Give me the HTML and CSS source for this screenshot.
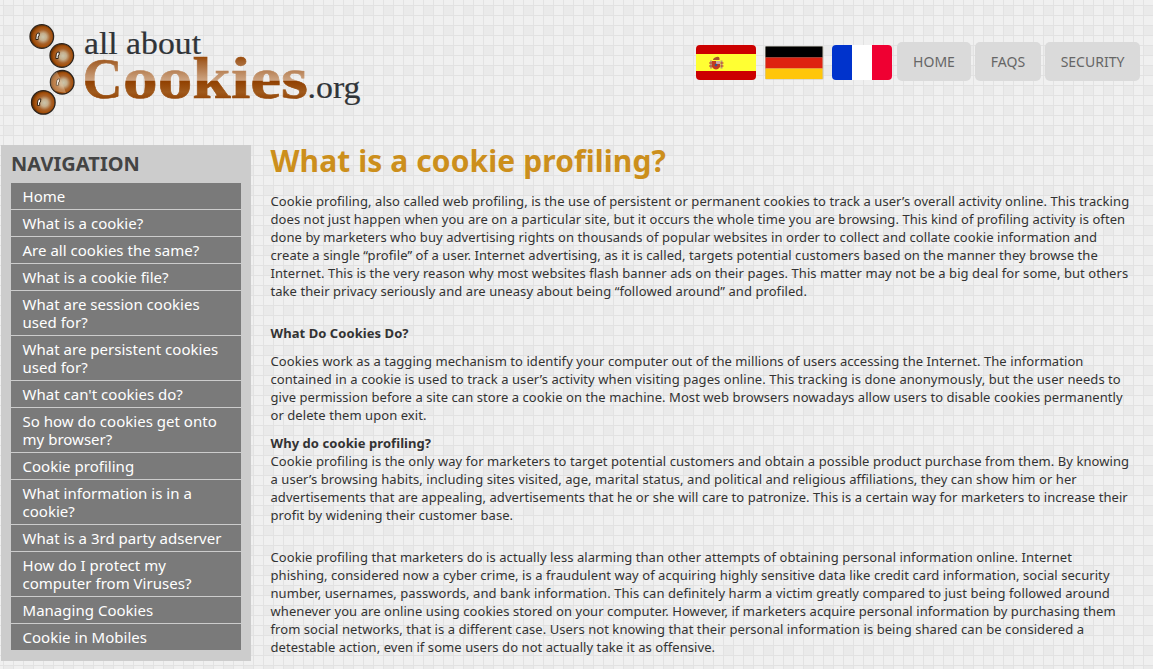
FILE: index.html
```html
<!DOCTYPE html>
<html lang="en">
<head>
<meta charset="utf-8">
<title>What is a cookie profiling?</title>
<link rel="stylesheet" href="styles.css">
</head>
<body>
<header class="header">
<svg class="logo" width="340" height="100" viewBox="24 20 340 100" role="img" aria-label="all about Cookies.org">
<defs>
<radialGradient id="bead" cx=".55" cy=".52" r=".5"><stop offset="0" stop-color="#cbc6ac"/><stop offset=".3" stop-color="#c5ae8c"/><stop offset=".6" stop-color="#a8622a"/><stop offset=".82" stop-color="#a4500c"/><stop offset="1" stop-color="#743500"/></radialGradient>
<linearGradient id="gloss" gradientUnits="userSpaceOnUse" x1="0" y1="56" x2="0" y2="101"><stop offset="0" stop-color="#974400"/><stop offset=".12" stop-color="#a3602a"/><stop offset=".54" stop-color="#cda482"/><stop offset=".56" stop-color="#914000"/><stop offset=".8" stop-color="#a05a1c"/><stop offset="1" stop-color="#914000"/></linearGradient>
<g id="ball"><circle r="11.8" fill="url(#bead)" stroke="#2c241e" stroke-width="1.3"/><path d="M-6 3L-5.500-1.500Q-4.800-4-2.500-3.500L-2.800-.3-3.700.2-3.600 3Z" fill="#fff" stroke="#241505" stroke-width=".9"/></g>
</defs>
<use href="#ball" x="41.800" y="36.500"/><use href="#ball" x="61.800" y="55.500"/><use href="#ball" x="62.200" y="82.300"/><use href="#ball" x="43.300" y="102.400"/>
<path d="M62 82L57 71.800A11.300 11.300 0 0 0 55 91L66 93Z" fill="#e8c7a5" opacity=".4"/>
<text class="logo-small" x="84" y="53.500" textLength="117" lengthAdjust="spacingAndGlyphs">all about</text>
<text class="logo-big" y="98"><tspan class="logo-cap" x="82.500" textLength="40" lengthAdjust="spacingAndGlyphs">C</tspan><tspan x="123" textLength="185" lengthAdjust="spacingAndGlyphs">ookies</tspan></text>
<text class="logo-small" x="307.500" y="98" textLength="53" lengthAdjust="spacingAndGlyphs">.org</text>
</svg>
<nav class="top">
<a class="flag"><svg width="60" height="35" viewBox="0 0 60 35"><clipPath id="rf"><rect width="60" height="35" rx="4"/></clipPath><g clip-path="url(#rf)"><path fill="#c00" d="M0 0h60v35H0z"/><path fill="#ff3" d="M0 9h60v17H0z"/></g><path d="M14 15.500h2v8h-2zM24.500 15.500h2v8h-2z" fill="#b99a70"/><path d="M13 18h3M24.500 18h3M13 21h3M24.500 21h3" stroke="#b33"/><path d="M16 16h8v6q-4 5-8 0z" fill="#c23b22"/><path d="M20 16h4v3h-4z" fill="#c9a9a5"/><path d="M17 15q0-2 3.500-3t3 3z" fill="#a7562b"/><circle cx="20" cy="20" r="1.300" fill="#36558f"/></svg></a>
<a class="flag"><svg width="60" height="35" viewBox="0 0 60 35"><rect x="1" y="1" width="58.500" height="33.500" rx="1.500" fill="#c9c6b8"/><path d="M1.500 1.500h57V12.500h-57z"/><path d="M1.500 12.500h57v11h-57z" fill="#de2110"/><path d="M1.500 23.500h57V34h-57z" fill="#ffc60a"/></svg></a>
<a class="flag"><svg width="60" height="35" viewBox="0 0 60 35"><g clip-path="url(#rf)"><path fill="#fff" d="M0 0h60v35H0z"/><path fill="#03c" d="M0 0h20v35H0z"/><path fill="#ef0032" d="M40 0h20v35H40z"/></g></svg></a>
<a class="tab home">HOME</a><a class="tab faqs">FAQS</a><a class="tab security">SECURITY</a>
</nav>
</header>
<div class="columns">
<aside class="sidebar">
<h2>NAVIGATION</h2>
<ul>
<li>Home</li><li>What is a cookie?</li><li>Are all cookies the same?</li><li>What is a cookie file?</li><li>What are session cookies<br>used for?</li><li>What are persistent cookies<br>used for?</li><li>What can't cookies do?</li><li>So how do cookies get onto<br>my browser?</li><li>Cookie profiling</li><li>What information is in a<br>cookie?</li><li>What is a 3rd party adserver</li><li>How do I protect my<br>computer from Viruses?</li><li>Managing Cookies</li><li>Cookie in Mobiles</li>
</ul>
</aside>
<main class="content">
<h1>What is a cookie profiling?</h1>
<p class="intro">Cookie profiling, also called web profiling, is the use of persistent or permanent cookies to track a user’s overall activity online. This tracking<br>does not just happen when you are on a particular site, but it occurs the whole time you are browsing. This kind of profiling activity is often<br>done by marketers who buy advertising rights on thousands of popular websites in order to collect and collate cookie information and<br>create a single “profile” of a user. Internet advertising, as it is called, targets potential customers based on the manner they browse the<br>Internet. This is the very reason why most websites flash banner ads on their pages. This matter may not be a big deal for some, but others<br>take their privacy seriously and are uneasy about being “followed around” and profiled.</p>
<p><strong>What Do Cookies Do?</strong></p>
<p>Cookies work as a tagging mechanism to identify your computer out of the millions of users accessing the Internet. The information<br>contained in a cookie is used to track a user’s activity when visiting pages online. This tracking is done anonymously, but the user needs to<br>give permission before a site can store a cookie on the machine. Most web browsers nowadays allow users to disable cookies permanently<br>or delete them upon exit.</p>
<p class="why"><strong>Why do cookie profiling?</strong><br>Cookie profiling is the only way for marketers to target potential customers and obtain a possible product purchase from them. By knowing<br>a user’s browsing habits, including sites visited, age, marital status, and political and religious affiliations, they can show him or her<br>advertisements that are appealing, advertisements that he or she will care to patronize. This is a certain way for marketers to increase their<br>profit by widening their customer base.</p>
<p>Cookie profiling that marketers do is actually less alarming than other attempts of obtaining personal information online. Internet<br>phishing, considered now a cyber crime, is a fraudulent way of acquiring highly sensitive data like credit card information, social security<br>number, usernames, passwords, and bank information. This can definitely harm a victim greatly compared to just being followed around<br>whenever you are online using cookies stored on your computer. However, if marketers acquire personal information by purchasing them<br>from social networks, that is a different case. Users not knowing that their personal information is being shared can be considered a<br>detestable action, even if some users do not actually take it as offensive.</p>
</main>
</div>
</body>
</html>
```
FILE: styles.css
```css
* { box-sizing: border-box; }
body {
  margin: 0;
  height: 669px;
  overflow: hidden;
  font-family: "Noto Sans", "Open Sans", sans-serif;
  color: #333;
  background-color: #f0f0f0;
  background-image:
    linear-gradient(#e2e2e2 1px, transparent 1px),
    linear-gradient(90deg, #e2e2e2 1px, transparent 1px),
    conic-gradient(transparent 75%, #eaeaea 0);
  background-size: 10px 10px, 10px 10px, 20px 20px;
  background-position: 0 5px, 3px 0, 3px 5px;
}
.header { height: 145px; display: flex; justify-content: space-between; padding: 20px 13px 0 24px; }
.logo { display: block; }
.logo-small { font: 32px "Liberation Serif", serif; fill: #303438; stroke: #303438; stroke-width: .2px; }
.logo-big { font: bold 60px "Liberation Serif", serif; fill: url(#gloss); stroke: url(#gloss); stroke-width: .6px; }
.logo-cap { font-size: 58px; }
.top { display: flex; padding-top: 22px; height: 61px; }
.flag { width: 60px; margin: 3px 8px 0 0; }
.flag:nth-child(3) { margin-right: 5px; }
.flag svg { display: block; }
.tab { height: 39px; background: #dadada; border-radius: 5px; color: #666; font-size: 14px; line-height: 39px; text-align: center; margin-right: 4px; }
.home { width: 74px; }
.faqs { width: 66px; }
.security { width: 95px; margin-right: 0; }
.columns { display: flex; padding-left: 1px; }
.sidebar { width: 250px; height: 516px; background: #ccc; padding: 0 10px; flex: none; }
h2 { margin: 0; height: 38px; font-size: 20px; line-height: 37px; letter-spacing: .05px; color: #444; }
ul { margin: 0; padding: 0; list-style: none; }
li { background: #7a7a7a; color: #fff; font-size: 15px; line-height: 18px; letter-spacing: .02px; padding: 4px 0 4px 11.5px; border-bottom: 1px solid #ccc; white-space: nowrap; }
.content { padding-left: 19.5px; white-space: nowrap; }
h1 { margin: 0 0 15px; font-size: 30px; line-height: 32px; letter-spacing: .09px; color: #cc8f1c; }
p { margin: 0 0 10px; font-size: 13px; line-height: 18px; letter-spacing: .065px; }
.intro, .why { margin-bottom: 24px; }
```
